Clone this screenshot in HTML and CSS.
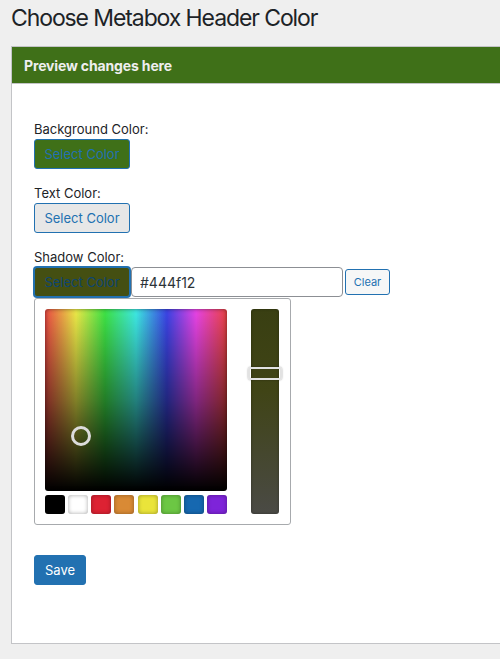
FILE: index.html
```html
<!DOCTYPE html>
<html lang="en">
<head>
<meta charset="utf-8">
<title>Choose Metabox Header Color</title>
<link rel="stylesheet" href="styles.css">
</head>
<body>
<h1 class="page-title">Choose Metabox Header Color</h1>
<div class="postbox">
  <div class="postbox-header">Preview changes here</div>
  <div class="postbox-inside">
    <div class="field">
      <label class="field-label">Background Color:</label>
      <button class="color-btn color-btn--bg" type="button">Select Color</button>
    </div>
    <div class="field">
      <label class="field-label">Text Color:</label>
      <button class="color-btn color-btn--text" type="button">Select Color</button>
    </div>
    <div class="field">
      <label class="field-label">Shadow Color:</label>
      <div class="picker-row">
        <button class="color-btn color-btn--shadow" type="button">Select Color</button>
        <input class="hex-input" type="text" value="#444f12">
        <button class="clear-btn" type="button">Clear</button>
      </div>
      <div class="iris">
        <div class="iris-left">
          <div class="iris-square">
            <span class="iris-square-handle"></span>
          </div>
          <div class="iris-palette">
            <span class="swatch swatch--black"></span>
            <span class="swatch swatch--white"></span>
            <span class="swatch swatch--red"></span>
            <span class="swatch swatch--orange"></span>
            <span class="swatch swatch--yellow"></span>
            <span class="swatch swatch--green"></span>
            <span class="swatch swatch--blue"></span>
            <span class="swatch swatch--purple"></span>
          </div>
        </div>
        <div class="iris-slider">
          <span class="iris-slider-handle"></span>
        </div>
      </div>
    </div>
    <button class="save-btn" type="button">Save</button>
  </div>
</div>
</body>
</html>
```
FILE: styles.css
```css
html, body {
  margin: 0;
  padding: 0;
}
body {
  background: #efefef;
  font-family: Inter, "Noto Sans", sans-serif;
  font-size: 13px;
  color: #1d2327;
}
.page-title {
  margin: 0;
  padding: 4px 0 0 11px;
  font-size: 23px;
  font-weight: 400;
  line-height: 29px;
  letter-spacing: -1.1px;
  color: #1d2327;
}
.postbox {
  margin: 13px 0 0 11px;
  border: 1px solid #c3c4c7;
  border-right: 0;
  background: #fff;
}
.postbox-header {
  height: 37px;
  box-sizing: border-box;
  padding-left: 12px;
  display: flex;
  align-items: center;
  background: #3f7018;
  color: #eeeeee;
  font-weight: 700;
  font-size: 14px;
  letter-spacing: -0.15px;
  border-bottom: 1px solid #c3c4c7;
}
.postbox-inside {
  padding: 36px 0 58px 22px;
}
.field {
  margin-bottom: 15px;
}
.field-label {
  display: block;
  line-height: 18px;
  margin-bottom: 1px;
  color: #1d2327;
}
.color-btn {
  box-sizing: border-box;
  width: 96px;
  height: 30px;
  padding: 0;
  border: 1px solid #2271b1;
  border-radius: 3px;
  font-family: inherit;
  font-size: 13px;
  color: #2271b1;
  display: block;
}
.color-btn--bg {
  background: #3f7018;
}
.color-btn--text {
  background: #e7e7e7;
}
.color-btn--shadow {
  background: #444f12;
  color: #0e4672;
  box-shadow: 0 0 0 1px #2271b1;
}
.picker-row {
  display: flex;
  align-items: center;
  gap: 1px;
  height: 30px;
}
.hex-input {
  box-sizing: border-box;
  width: 212px;
  height: 30px;
  margin: 0;
  padding: 0 8px;
  border: 1px solid #8c8f94;
  border-radius: 4px;
  font-family: inherit;
  font-size: 14px;
  color: #2c3338;
  background: #fff;
}
.clear-btn {
  box-sizing: border-box;
  margin-left: 1px;
  height: 26px;
  width: 45px;
  padding: 0;
  border: 1px solid #2271b1;
  border-radius: 3px;
  background: #f6f7f7;
  color: #2271b1;
  font-family: inherit;
  font-size: 11px;
}
.iris {
  box-sizing: border-box;
  width: 257px;
  margin-top: 1px;
  padding: 10px 11px 10px 10px;
  border: 1px solid #a7aaad;
  border-radius: 3px;
  display: flex;
  justify-content: space-between;
  background: #fff;
}
.iris-left {
  width: 182px;
}
.iris-square {
  position: relative;
  height: 182px;
  border-radius: 3px;
  background:
    linear-gradient(to bottom, rgba(0,0,0,0) 0%, rgba(0,0,0,0.45) 50%, #000 100%),
    linear-gradient(to right, #ec4a44 0%, #ecea48 17%, #3ee446 33%, #3eeae4 50%, #3c44e6 67%, #e844e6 83%, #ec4444 100%);
  box-shadow: inset 0 0 4px rgba(0,0,0,0.5);
}
.iris-square-handle {
  position: absolute;
  left: 26px;
  top: 117px;
  width: 20px;
  height: 20px;
  box-sizing: border-box;
  border: 3px solid #dcdcdc;
  border-radius: 50%;
}
.iris-palette {
  margin-top: 4px;
  display: flex;
  justify-content: space-between;
}
.swatch {
  width: 20px;
  height: 19px;
  border-radius: 3px;
  box-shadow: inset 0 0 4px rgba(0,0,0,0.35);
}
.swatch--black { background: #000; }
.swatch--white { background: #fff; }
.swatch--red { background: #dd2233; }
.swatch--orange { background: #d98a35; }
.swatch--yellow { background: #eae43a; }
.swatch--green { background: #6cc744; }
.swatch--blue { background: #1668b0; }
.swatch--purple { background: #7e24d9; }
.iris-slider {
  position: relative;
  width: 28px;
  height: 205px;
  border-radius: 3px;
  background: linear-gradient(to bottom, #393f12 0%, #404416 40%, #4a4a45 100%);
  box-shadow: inset 0 0 3px rgba(0,0,0,0.35);
}
.iris-slider-handle {
  position: absolute;
  left: -3px;
  top: 58px;
  width: 34px;
  height: 13px;
  box-sizing: border-box;
  border: 2px solid #e2e2e2;
  border-radius: 3px;
  box-shadow: 0 0 2px rgba(0,0,0,0.4);
}
.save-btn {
  display: block;
  box-sizing: border-box;
  margin-top: 30px;
  height: 30px;
  padding: 0 10px;
  border: 1px solid #2271b1;
  border-radius: 3px;
  background: #2271b1;
  color: #fff;
  font-family: inherit;
  font-size: 13px;
}
```
